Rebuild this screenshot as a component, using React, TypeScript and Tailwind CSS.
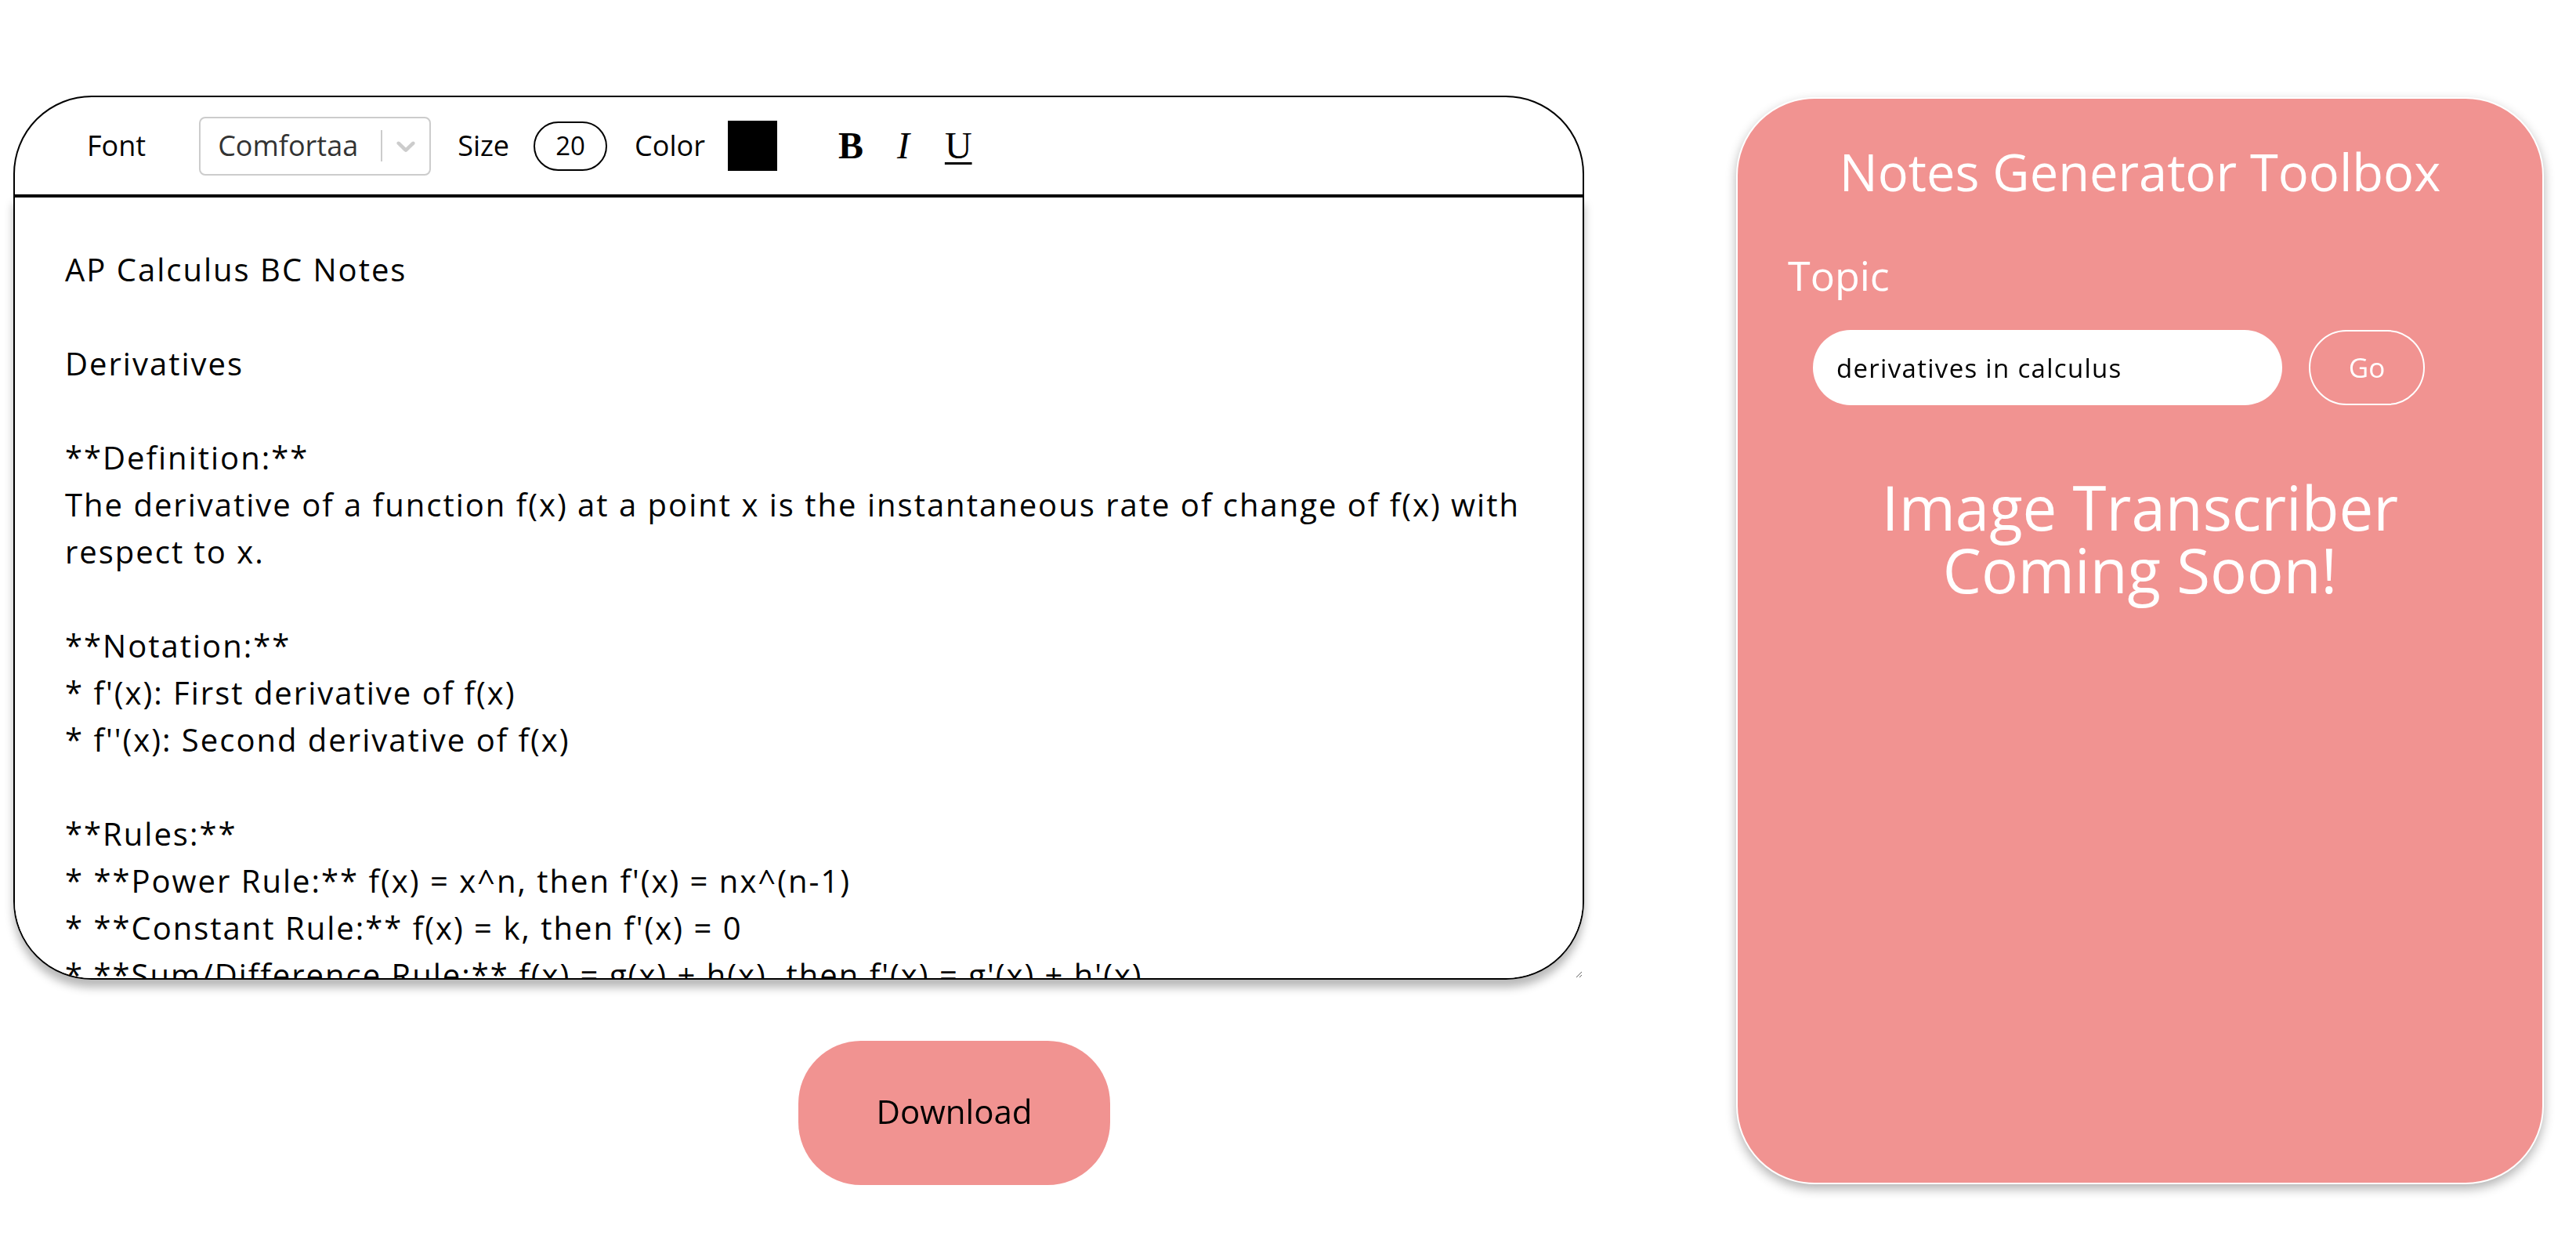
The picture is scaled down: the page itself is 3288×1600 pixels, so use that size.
const NOTES = `AP Calculus BC Notes

Derivatives

**Definition:**
The derivative of a function f(x) at a point x is the instantaneous rate of change of f(x) with respect to x.

**Notation:**
* f'(x): First derivative of f(x)
* f''(x): Second derivative of f(x)

**Rules:**
* **Power Rule:** f(x) = x^n, then f'(x) = nx^(n-1)
* **Constant Rule:** f(x) = k, then f'(x) = 0
* **Sum/Difference Rule:** f(x) = g(x) ± h(x), then f'(x) = g'(x) ± h'(x)
* **Product Rule:** f(x) = g(x)h(x), then f'(x) = g'(x)h(x) + g(x)h'(x)
* **Quotient Rule:** f(x) = g(x)/h(x), then f'(x) = (g'(x)h(x) - g(x)h'(x)) / h(x)^2
* **Chain Rule:** f(x) = g(h(x)), then f'(x) = g'(h(x)) * h'(x)
`

const ChevronDown = () => (
  <svg viewBox="0 0 20 20" className="h-[40px] w-[40px] fill-[#cccccc]">
    <path d="M4.516 7.548c0.436-0.446 1.043-0.481 1.576 0l3.908 3.747 3.908-3.747c0.533-0.481 1.141-0.446 1.574 0 0.436 0.445 0.408 1.197 0 1.615-0.406 0.418-4.695 4.502-4.695 4.502-0.217 0.223-0.502 0.335-0.787 0.335s-0.57-0.112-0.789-0.335c0 0-4.287-4.084-4.695-4.502s-0.436-1.17 0-1.615z" />
  </svg>
)

const Toolbar = () => {
  return (
    <div className="flex h-[128px] w-[2005px] items-center rounded-t-[100px] border-2 border-black pl-[92px] text-[36px] text-black">
      <span>Font</span>
      <div className="ml-[68px] flex h-[75px] w-[296px] items-center rounded-[8px] border-2 border-[#cccccc] bg-white">
        <span className="flex-1 pl-[22px] text-[#333333]">Comfortaa</span>
        <span className="h-[40px] w-[2px] bg-[#cccccc]" />
        <span className="px-[10px]">
          <ChevronDown />
        </span>
      </div>
      <span className="ml-[34px]">Size</span>
      <div className="ml-[31px] flex h-[63px] w-[94px] items-center justify-center rounded-full border-2 border-black text-[33px]">
        20
      </div>
      <span className="ml-[35px]">Color</span>
      <div className="ml-[29px] h-[64px] w-[63px] bg-black" />
      <div className="ml-[78px] flex items-center font-['Liberation_Serif',serif] text-[48px] leading-none">
        <button type="button" className="cursor-pointer font-bold">
          B
        </button>
        <button type="button" className="ml-[43px] cursor-pointer italic">
          I
        </button>
        <button type="button" className="ml-[45px] cursor-pointer underline decoration-[3px] underline-offset-[5px]">
          U
        </button>
      </div>
    </div>
  )
}

const Toolbox = () => {
  return (
    <div className="mt-[2px] flex h-[1387px] w-[1031px] flex-col rounded-[100px] border-2 border-white bg-[#f19391] pt-[53px] text-white shadow-[0_6px_14px_rgba(0,0,0,0.3)]">
      <h1 className="text-center text-[65px] leading-[80px]">Notes Generator Toolbox</h1>
      <h2 className="mt-[62px] pl-[64px] text-[52px] leading-[60px]">Topic</h2>
      <div className="mt-[40px] flex items-center pl-[96px]">
        <input
          type="text"
          defaultValue="derivatives in calculus"
          className="h-[96px] w-[599px] rounded-full bg-white pl-[30px] text-[33px] tracking-[1.3px] text-black outline-none"
        />
        <button
          type="button"
          className="ml-[34px] h-[96px] w-[148px] cursor-pointer rounded-full border-2 border-white text-[35px] text-white"
        >
          Go
        </button>
      </div>
      <div className="mt-[90px] text-center text-[78px]">
        <p className="h-[80px] leading-[80px]">Image Transcriber</p>
        <p className="h-[80px] leading-[80px]">Coming Soon!</p>
      </div>
    </div>
  )
}

export default function App() {
  return (
    <div className="flex min-h-[1600px] bg-white pt-[122px] pl-[17px] font-['Open_Sans',sans-serif] text-black">
      <div className="flex w-[2005px] flex-col">
        <Toolbar />
        <textarea
          defaultValue={NOTES}
          spellCheck={false}
          className="h-[1000px] w-[2005px] rounded-b-[100px] border-2 border-black bg-white px-[64px] pt-[62px] text-[40px] leading-[60px] tracking-[2px] text-black shadow-[0_10px_12px_rgba(0,0,0,0.28)] outline-none [scrollbar-width:none]"
        />
        <button
          type="button"
          className="mt-[78px] ml-[1002px] flex h-[184px] w-[398px] cursor-pointer items-center justify-center rounded-[80px] bg-[#f19391] pb-[6px] text-[42px] text-black"
        >
          Download
        </button>
      </div>
      <div className="ml-[194px]">
        <Toolbox />
      </div>
    </div>
  )
}
